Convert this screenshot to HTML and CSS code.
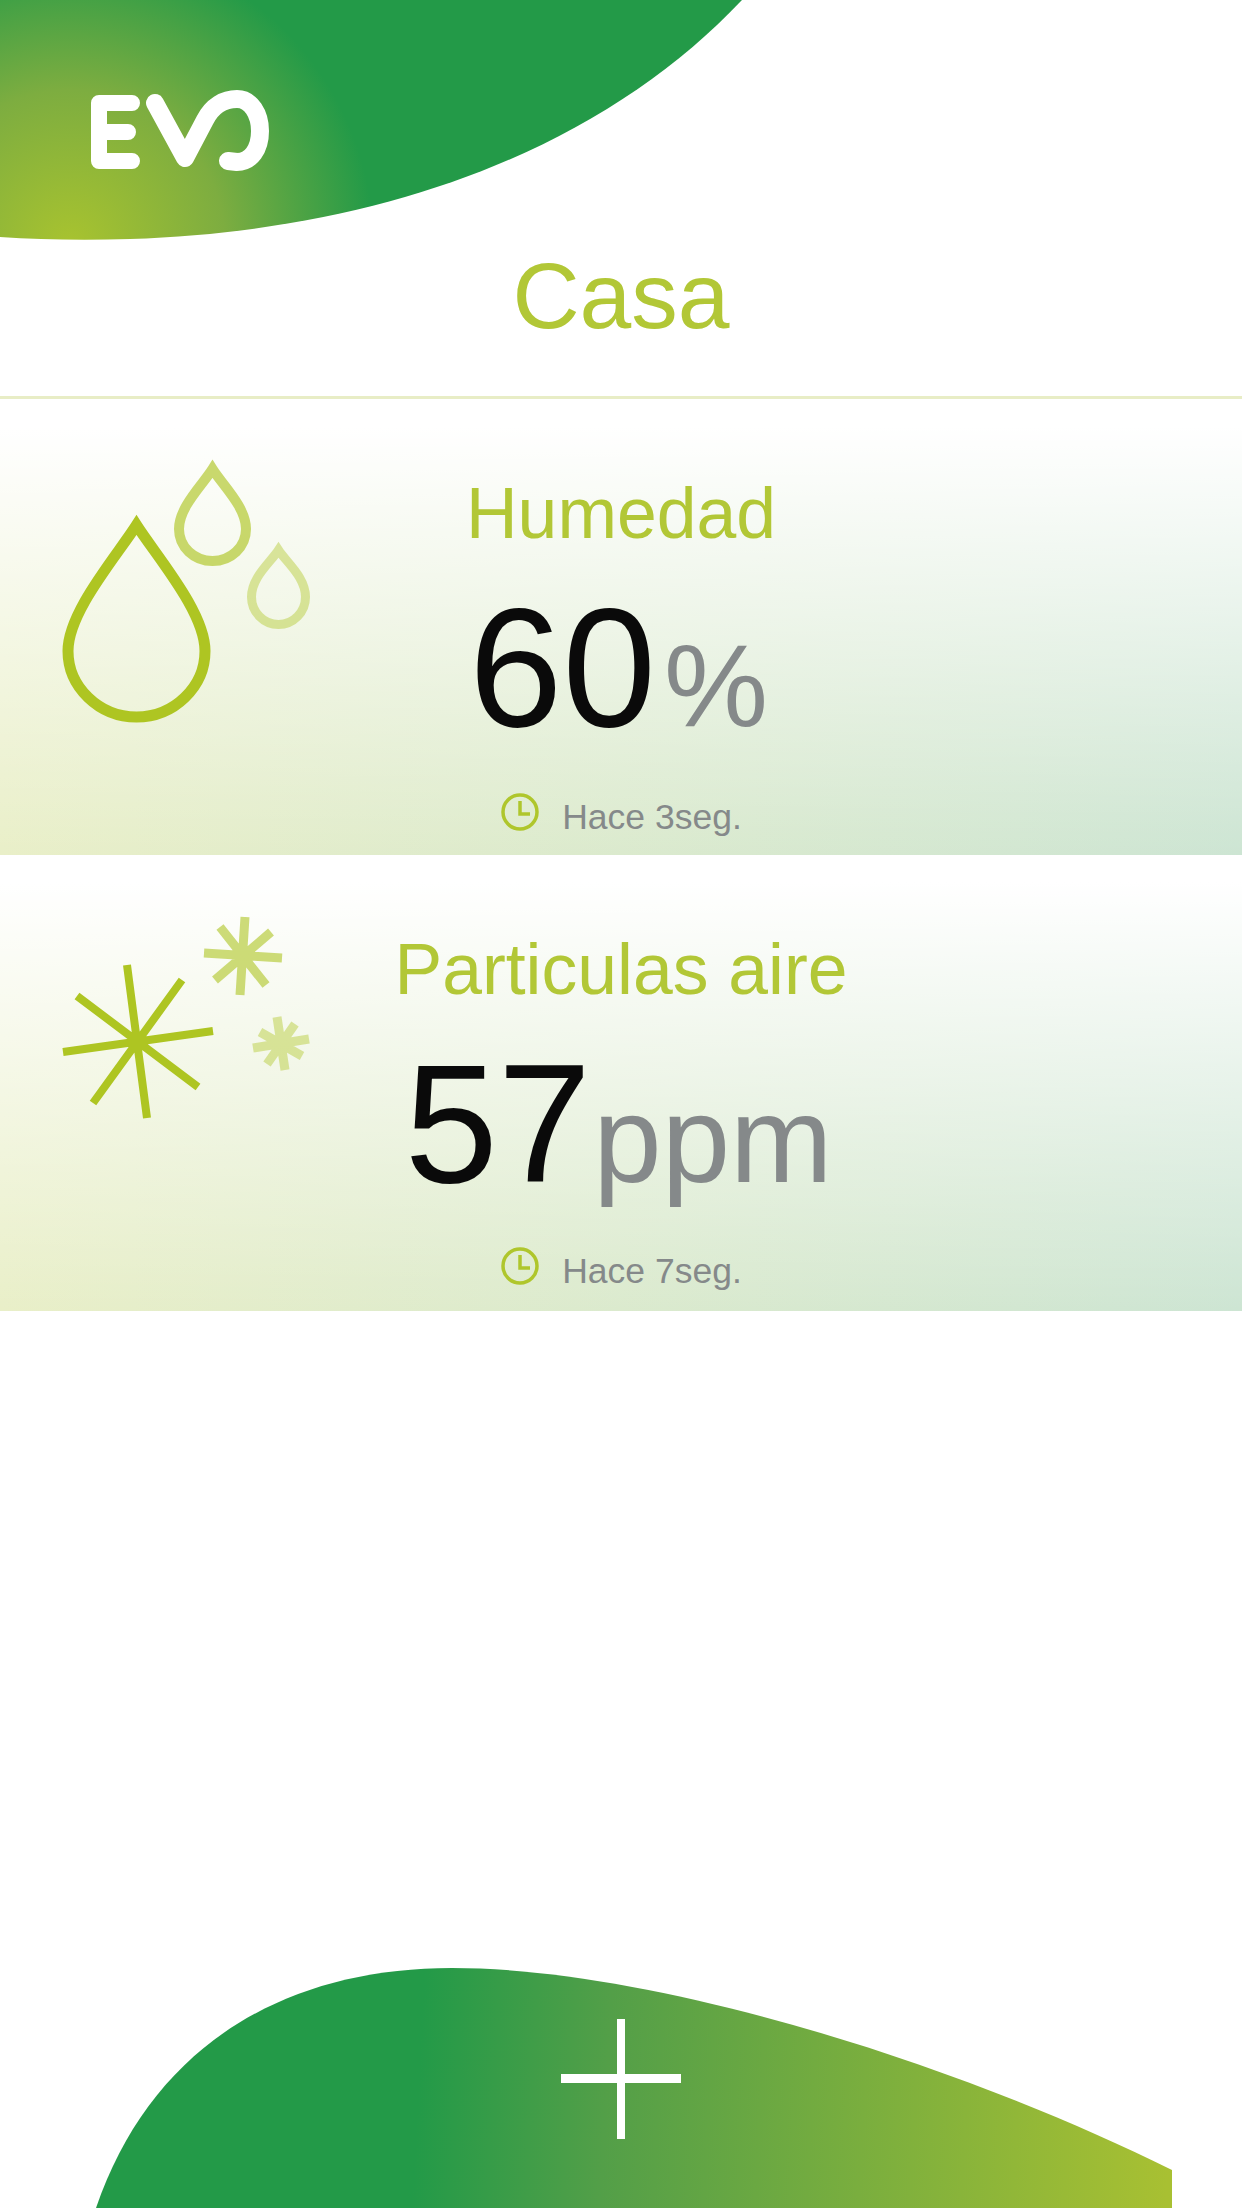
FILE: index.html
```html
<!DOCTYPE html>
<html lang="es">
  <head>
    <meta charset="UTF-8" />
    <meta name="viewport" content="width=device-width, initial-scale=1.0" />
    <title>EVO - Casa</title>
    <link rel="stylesheet" href="styles.css">
  </head>
  <body>
    <div class="app">
      <header class="top-bar">
        <svg class="top-shape" viewBox="0 0 1242 241" width="1242" height="241">
          <defs>
            <radialGradient id="topFill" gradientUnits="userSpaceOnUse" cx="70" cy="245" r="310">
              <stop offset="0" stop-color="#a8c32f" />
              <stop offset="0.5" stop-color="#7dad40" />
              <stop offset="0.98" stop-color="#239a48" />
            </radialGradient>
          </defs>
          <path d="M0 237 Q60 241 130 239 C400 230 610 140 742 0 H0 Z" fill="url(#topFill)" />
          <g fill="none" stroke="#fff" stroke-linecap="round" stroke-linejoin="round">
            <path stroke-width="16" d="M132 103 H99 V161 H132 M99 132 H128" />
            <path stroke-width="18" d="M155 103 L185 158 L205 120 C212 106 224 99 237 99 C251 99 260 114 260 131 C260 149 251 162 237 162 L228 161" />
          </g>
        </svg>
        <h1 class="page-title">Casa</h1>
      </header>

      <section class="sensor-card">
        <svg class="sensor-icon" viewBox="60 455 255 270" width="255" height="270">
          <g fill="none" stroke="#aec522" stroke-linejoin="miter">
            <path stroke-width="11" d="M136.500 525 C116 557 68 612 68 651 C68 687 99 717 136.500 717 C174 717 205 687 205 651 C205 612 157 557 136.500 525 Z" />
            <path stroke-width="10" opacity="0.65" d="M212.500 469 C202.500 485 179 507 179 529 C179 547 194 561 212.500 561 C231 561 246 547 246 529 C246 507 222.500 485 212.500 469 Z" />
            <path stroke-width="9" opacity="0.42" d="M278.500 550 C270.500 562.500 251.500 577 251.500 597 C251.500 612 263.500 624.500 278.500 624.500 C293.500 624.500 305.500 612 305.500 597 C305.500 577 286.500 562.500 278.500 550 Z" />
          </g>
        </svg>
        <div class="sensor-info">
          <h2 class="sensor-name">Humedad</h2>
          <div class="sensor-value">60<span class="sensor-unit">%</span></div>
          <div class="sensor-time">
            <svg class="clock" viewBox="0 0 40 40" width="40" height="40">
              <circle cx="20" cy="20" r="17" />
              <path d="M20 9 V22 H30" />
            </svg>
            <span>Hace 3seg.</span>
          </div>
        </div>
      </section>

      <section class="sensor-card">
        <svg class="sensor-icon" viewBox="60 911 255 270" width="255" height="270">
          <g fill="none" stroke="#aec522">
            <path stroke-width="8" d="M127 965 L147 1118 M77 996 L198 1087 M182 980 L93 1103 M63 1052 L213 1031" />
            <path stroke-width="9" opacity="0.6" d="M245 917 L240 995 M220 927 L266 985 M271 932 L215 980 M204 953 L282 958" />
            <path stroke-width="9" opacity="0.42" d="M277 1017 L285 1070 M260 1032 L302 1056 M295 1024 L267 1064 M253 1048 L309 1039" />
          </g>
        </svg>
        <div class="sensor-info">
          <h2 class="sensor-name">Particulas aire</h2>
          <div class="sensor-value">57<span class="sensor-unit sensor-unit-wide">ppm</span></div>
          <div class="sensor-time">
            <svg class="clock" viewBox="0 0 40 40" width="40" height="40">
              <circle cx="20" cy="20" r="17" />
              <path d="M20 9 V22 H30" />
            </svg>
            <span>Hace 7seg.</span>
          </div>
        </div>
      </section>

      <footer class="bottom-bar">
        <svg class="bottom-shape" viewBox="0 1960 1242 248" width="1242" height="248">
          <defs>
            <linearGradient id="bottomFill" gradientUnits="userSpaceOnUse" x1="420" y1="2060" x2="1172" y2="2100">
              <stop offset="0" stop-color="#239a48" />
              <stop offset="0.25" stop-color="#539f48" />
              <stop offset="1" stop-color="#a8c032" />
            </linearGradient>
          </defs>
          <path d="M96 2208 C150 2050 280 1968 452 1968 C650 1968 950 2060 1172 2170 V2208 Z" fill="url(#bottomFill)" />
          <path d="M561 2074 H617 V2019 H625 V2074 H681 V2083 H625 V2139 H617 V2083 H561 Z" fill="#fff" />
        </svg>
      </footer>
    </div>
  </body>
</html>
```

FILE: styles.css
```css
* {
  margin: 0;
  padding: 0;
  box-sizing: border-box;
}

body {
  font-family: "Liberation Sans", Arial, sans-serif;
  background: white;
}

.app {
  width: 1242px;
  height: 2208px;
  display: flex;
  flex-direction: column;
  overflow: hidden;
}

.top-bar {
  height: 399px;
  border-bottom: 3px solid #e8edc6;
}

.top-shape,
.bottom-shape,
.sensor-icon,
.clock {
  display: block;
}

.page-title {
  margin-top: -2px;
  height: 156px;
  line-height: 114px;
  text-align: center;
  font-size: 93px;
  font-weight: normal;
  color: #b2c736;
}

.sensor-card {
  height: 456px;
  display: grid;
  grid-template-columns: 1fr auto 1fr;
  background: linear-gradient(to bottom, white 6%, rgba(255, 255, 255, 0) 100%),
    linear-gradient(to right, #e9efc8 0%, #cde5d3 100%);
}

.sensor-icon {
  margin: 56px 0 0 60px;
}

.sensor-info {
  padding-top: 72px;
  text-align: center;
}

.sensor-name {
  font-size: 71.500px;
  font-weight: normal;
  line-height: 84px;
  color: #b2c736;
}

.sensor-value {
  margin-top: 28px;
  padding-right: 5px;
  font-size: 168px;
  line-height: 170px;
  color: #0a0a0a;
  white-space: nowrap;
}

.sensor-unit {
  margin-left: 8px;
  font-size: 117px;
  color: #85898a;
}

.sensor-unit-wide {
  margin-left: 2px;
  font-size: 123px;
}

.sensor-time {
  margin-top: 23px;
  display: flex;
  justify-content: center;
  align-items: center;
  gap: 22px;
  font-size: 35.500px;
  line-height: 46px;
  color: #85898a;
}

.clock {
  margin-top: -11px;
}

.clock circle,
.clock path {
  fill: none;
  stroke: #afc62c;
  stroke-width: 3.500;
}

.bottom-bar {
  margin-top: auto;
}
```
